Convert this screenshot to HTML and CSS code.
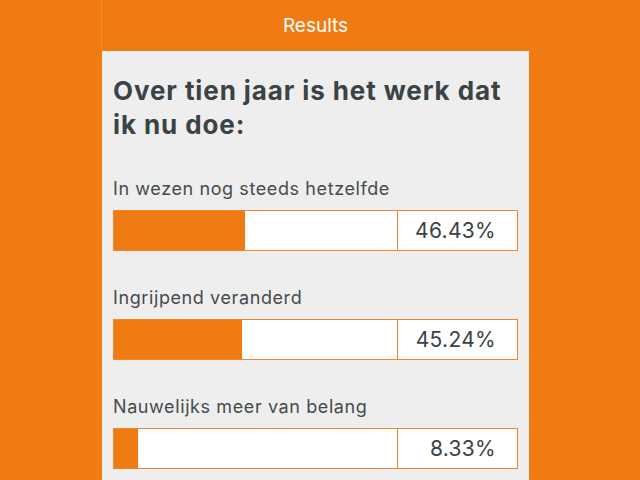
FILE: index.html
```html
<!DOCTYPE html>
<html lang="nl">
<head>
<meta charset="utf-8">
<title>Results</title>
<link rel="stylesheet" href="styles.css">
</head>
<body>
<div class="app">
  <header class="topbar">Results</header>
  <main class="panel">
    <h1 class="question">Over tien jaar is het werk dat ik nu doe:</h1>
    <section class="answer">
      <div class="label">In wezen nog steeds hetzelfde</div>
      <div class="bar">
        <div class="track"><div class="fill" style="width:46.43%"></div></div>
        <div class="pct">46.43%</div>
      </div>
    </section>
    <section class="answer">
      <div class="label">Ingrijpend veranderd</div>
      <div class="bar">
        <div class="track"><div class="fill" style="width:45.24%"></div></div>
        <div class="pct">45.24%</div>
      </div>
    </section>
    <section class="answer">
      <div class="label">Nauwelijks meer van belang</div>
      <div class="bar">
        <div class="track"><div class="fill" style="width:8.33%"></div></div>
        <div class="pct">8.33%</div>
      </div>
    </section>
  </main>
</div>
</body>
</html>
```
FILE: styles.css
```css
html, body {
  margin: 0;
  padding: 0;
  height: 100%;
}
body {
  background: #f07b12;
  font-family: Inter, "Liberation Sans", Arial, sans-serif;
  overflow: hidden;
}
.app {
  margin-left: 102px;
  width: 427px;
  height: 100%;
  display: flex;
  flex-direction: column;
}
.topbar {
  height: 51px;
  display: flex;
  align-items: center;
  justify-content: center;
  color: #ffffff;
  font-size: 19px;
  border-left: 1px solid rgba(255, 255, 255, 0.12);
  margin-left: -1px;
}
.panel {
  flex: 1;
  background: #eeeeee;
  padding: 0 11px;
  display: flex;
  flex-direction: column;
}
.question {
  margin: 23px 0 0;
  font-size: 26px;
  line-height: 34px;
  font-weight: 700;
  letter-spacing: 0.9px;
  color: #3a4345;
}
.answer {
  display: flex;
  flex-direction: column;
}
.answer:first-of-type {
  margin-top: 36px;
}
.answer + .answer {
  margin-top: 36px;
}
.label {
  font-size: 18px;
  line-height: 22px;
  letter-spacing: 0.6px;
  color: #454b4d;
}
.bar {
  margin-top: 10px;
  height: 41px;
  box-sizing: border-box;
  border: 1px solid #f0852a;
  display: flex;
  background: #ffffff;
}
.track {
  flex: 1;
  display: flex;
}
.fill {
  background: #f07b12;
}
.pct {
  width: 120px;
  box-sizing: border-box;
  border-left: 1px solid #f0852a;
  display: flex;
  align-items: center;
  justify-content: flex-end;
  padding-right: 21px;
  font-size: 21px;
  letter-spacing: 0.3px;
  color: #3a4345;
}
```
